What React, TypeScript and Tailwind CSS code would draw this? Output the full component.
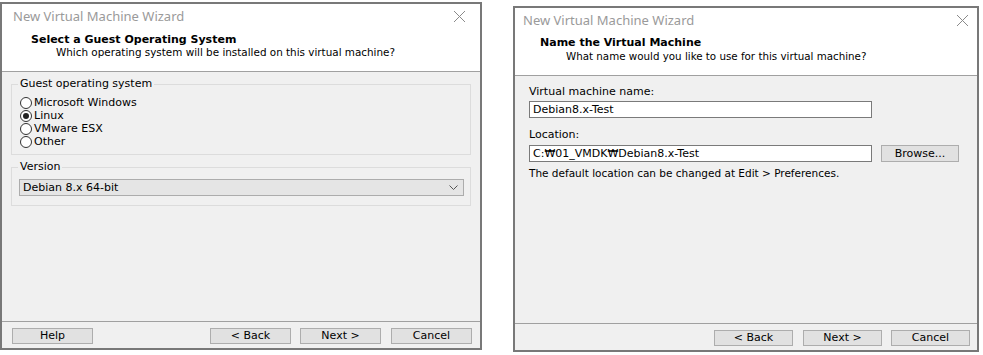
import React from "react";

const F = "font-['DejaVu_Sans',sans-serif]";

function CloseX() {
  return (
    <svg width="13" height="13" viewBox="0 0 13 13" className="block">
      <path d="M1 1 L12 12 M12 1 L1 12" stroke="#8a8a8a" strokeWidth="1" fill="none" />
    </svg>
  );
}

function Radio({ checked, label }: { checked?: boolean; label: string }) {
  return (
    <div className="flex items-center h-[13px]">
      <div className="w-[12px] h-[12px] rounded-full border border-[#333] bg-white flex items-center justify-center">
        {checked && <div className="w-[6px] h-[6px] rounded-full bg-[#222]" />}
      </div>
      <span className="ml-[2px] text-[11px] leading-[13px] text-black">{label}</span>
    </div>
  );
}

function Btn({ label, w }: { label: string; w: string }) {
  return (
    <div
      className={`${w} h-[16px] bg-[#e1e1e1] border border-[#adadad] flex items-center justify-center text-[11px] leading-[14px] text-black`}
    >
      {label}
    </div>
  );
}

export default function App() {
  return (
    <div className={`w-[983px] h-[355px] bg-white flex items-start ${F}`}>
      {/* Left dialog */}
      <div className="mt-[2px] w-[482px] h-[348px] border-2 border-[#787878] bg-[#f0f0f0] flex flex-col">
        <div className="h-[68px] bg-white border-b border-[#a0a0a0]">
          <div className="h-[24px] flex items-center justify-between pl-[11px] pr-[14px]">
            <span className="font-['Noto_Sans',sans-serif] text-[13px] leading-[16px] text-[#9a9a9a]">New Virtual Machine Wizard</span>
            <CloseX />
          </div>
          <div className="mt-[6px] h-[12px] leading-[12px] pl-[29px] text-[11px] font-bold text-black">
            Select a Guest Operating System
          </div>
          <div className="h-[12px] leading-[12px] pl-[54px] text-[10.4px] text-black">
            Which operating system will be installed on this virtual machine?
          </div>
        </div>
        <div className="flex-1 pt-[6px] px-[9px]">
          <fieldset className="border border-[#dcdcdc] pl-[6px] pr-[6px] pt-[6px] pb-[6px]">
            <legend className="px-[2px] text-[11px] leading-[12px] text-black">Guest operating system</legend>
            <div className="ml-[2px] flex flex-col">
              <Radio label="Microsoft Windows" />
              <Radio label="Linux" checked />
              <Radio label="VMware ESX" />
              <Radio label="Other" />
            </div>
          </fieldset>
          <fieldset className="mt-[6px] border border-[#dcdcdc] pl-[6px] pr-[6px] pt-[6px] pb-[9px]">
            <legend className="px-[2px] text-[11px] leading-[12px] text-black">Version</legend>
            <div className="ml-[1px] h-[17px] bg-[#e5e5e5] border border-[#acacac] flex items-center justify-between pl-[3px] pr-[5px]">
              <span className="text-[11px] leading-[14px] text-black">Debian 8.x 64-bit</span>
              <svg width="9" height="5" viewBox="0 0 9 5" className="block">
                <path d="M0.5 0.5 L4.5 4.5 L8.5 0.5" stroke="#555" strokeWidth="1" fill="none" />
              </svg>
            </div>
          </fieldset>
        </div>
        <div className="h-[27px] border-t border-[#a0a0a0] pt-[6px] pl-[10px] pr-[8px] flex items-start">
          <Btn label="Help" w="w-[81px]" />
          <div className="flex-1" />
          <Btn label="< Back" w="w-[81px]" />
          <div className="ml-[9px]"><Btn label="Next >" w="w-[81px]" /></div>
          <div className="ml-[10px]"><Btn label="Cancel" w="w-[81px]" /></div>
        </div>
      </div>

      {/* Right dialog */}
      <div className="ml-[31px] mt-[6px] w-[466px] h-[346px] border-2 border-[#787878] bg-[#f0f0f0] flex flex-col">
        <div className="h-[68px] bg-white border-b border-[#a0a0a0]">
          <div className="h-[24px] flex items-center justify-between pl-[8px] pr-[8px]">
            <span className="font-['Noto_Sans',sans-serif] text-[13px] leading-[16px] text-[#9a9a9a]">New Virtual Machine Wizard</span>
            <CloseX />
          </div>
          <div className="mt-[5px] h-[12px] leading-[12px] pl-[25px] text-[11px] font-bold text-black">
            Name the Virtual Machine
          </div>
          <div className="mt-[1px] h-[12px] leading-[12px] pl-[51px] text-[10.3px] text-black">
            What name would you like to use for this virtual machine?
          </div>
        </div>
        <div className="flex-1 pt-[10px] pl-[14px] flex flex-col items-start">
          <div className="h-[12px] leading-[12px] text-[11px] text-black">Virtual machine name:</div>
          <div className="mt-[3px] w-[343px] h-[17px] bg-white border border-[#7a7a7a] flex items-center pl-[3px] text-[11px] leading-[14px] text-black">
            Debian8.x-Test
          </div>
          <div className="mt-[11px] h-[12px] leading-[12px] text-[11px] text-black">Location:</div>
          <div className="mt-[4px] flex items-start">
            <div className="w-[343px] h-[17px] bg-white border border-[#7a7a7a] flex items-center pl-[3px] text-[11px] leading-[14px] text-black">
              C:₩01_VMDK₩Debian8.x-Test
            </div>
            <div className="ml-[9px] w-[78px] h-[17px] bg-[#e1e1e1] border border-[#adadad] flex items-center justify-center text-[11px] leading-[14px] text-black">
              Browse...
            </div>
          </div>
          <div className="mt-[5px] h-[12px] leading-[12px] text-[10.5px] text-black">
            The default location can be changed at Edit &gt; Preferences.
          </div>
        </div>
        <div className="h-[27px] border-t border-[#a0a0a0] pt-[6px] pr-[7px] flex items-start justify-end">
          <Btn label="< Back" w="w-[79px]" />
          <div className="ml-[10px]"><Btn label="Next >" w="w-[79px]" /></div>
          <div className="ml-[9px]"><Btn label="Cancel" w="w-[79px]" /></div>
        </div>
      </div>
    </div>
  );
}
